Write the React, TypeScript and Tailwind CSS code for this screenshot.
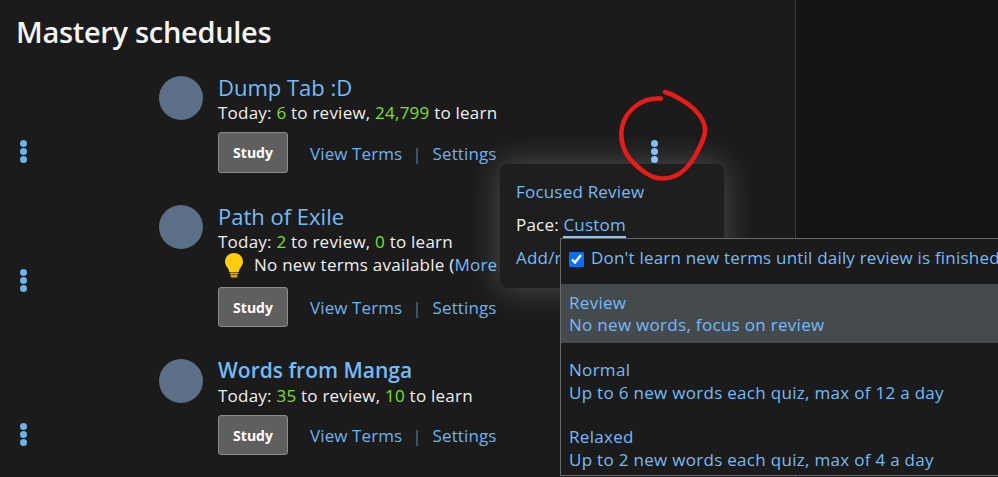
import React from 'react';

const font = "font-['Open_Sans',sans-serif]";

const Kebab: React.FC<{ dot?: string }> = ({ dot = 'bg-[#6cb4f0]' }) => (
  <div className="flex flex-col w-[7px] gap-px">
    <span className={`w-[7px] h-[7px] rounded-full ${dot}`}></span>
    <span className={`w-[7px] h-[7px] rounded-full ${dot}`}></span>
    <span className={`w-[7px] h-[7px] rounded-full ${dot}`}></span>
  </div>
);

const Bulb = () => (
  <svg width="20" height="26" viewBox="0 0 20 26" className="shrink-0">
    <path d="M10 1C4.8 1 1 4.9 1 9.6c0 3.6 2.2 5.6 3.4 7.6.6 1 .8 1.8.9 2.8h9.4c.1-1 .3-1.8.9-2.8 1.2-2 3.4-4 3.4-7.6C19 4.9 15.2 1 10 1z" fill="#ffcc12" />
    <rect x="5.5" y="20.4" width="9" height="2.2" rx="1" fill="#e8a000" />
    <rect x="6.5" y="23" width="7" height="2.4" rx="1.2" fill="#e8a000" />
  </svg>
);

interface Schedule {
  name: string;
  review: string;
  learn: string;
  hint?: boolean;
  heavy?: boolean;
  tall?: boolean;
}

const schedules: Schedule[] = [
  { name: 'Dump Tab :D', review: '6', learn: '24,799', tall: true },
  { name: 'Path of Exile', review: '2', learn: '0', hint: true },
  { name: 'Words from Manga', review: '35', learn: '10', heavy: true },
];

const ScheduleRow: React.FC<{ item: Schedule }> = ({ item }) => (
  <div className="flex items-start mb-8">
    <div className="w-[159px] pl-5 pt-16 shrink-0">
      <Kebab />
    </div>
    <div className="w-11 h-11 rounded-full bg-[#5b7087] shrink-0"></div>
    <div className="ml-[15px] w-[433px] shrink-0">
      <div className={`h-[26px] leading-[22px] text-[#76bbf7] whitespace-nowrap ${item.heavy ? 'text-[21px] font-semibold' : 'text-[22px] font-medium'}`}>{item.name}</div>
      <div className="text-[17px] tracking-[0.23px] leading-[22px] text-[#f0f0f0]">
        Today: <span className="text-[#7ee02c]">{item.review}</span> to review,{' '}
        <span className="text-[#7ee02c]">{item.learn}</span> to learn
      </div>
      {item.hint && (
        <div className="flex items-center h-6 text-[17px] tracking-[0.23px] leading-[22px] text-[#f0f0f0] pl-[6px] whitespace-nowrap">
          <Bulb />
          <span className="ml-[10px]">No new terms available (<span className="text-[#76bbf7]">More info</span>)</span>
        </div>
      )}
      <div className={`flex items-center ${item.hint ? 'mt-[10px]' : 'mt-2'}`}>
        <button className={`w-[70px] ${item.tall ? 'h-[41px]' : 'h-10'} bg-[#5f5f5f] border border-[#8c8c8c] rounded-[3px] text-[14px] font-bold text-white`}>
          Study
        </button>
        <span className="ml-[22px] pt-[2px] text-[17px] tracking-[0.1px] text-[#6db3f2]">View Terms</span>
        <span className="ml-[10px] mr-[11px] pt-[2px] text-[17px] text-[#6e6e6e]">|</span>
        <span className="pt-[2px] text-[17px] tracking-[0.1px] text-[#6db3f2]">Settings</span>
      </div>
    </div>
    <div className="pt-16 shrink-0">
      <Kebab dot="bg-[#7fbdf7]" />
    </div>
  </div>
);

export default function App() {
  return (
    <div className={`relative w-[998px] h-[477px] overflow-hidden bg-[#141414] ${font}`}>
      <div className="w-[796px] h-full bg-[#1b1b1b] border-r border-[#3a3a3a]">
        <h1 className="pl-4 pt-[12px] h-[76px] text-[29px] leading-10 font-semibold tracking-[-0.3px] text-[#f4f4f4] whitespace-nowrap">
          Mastery schedules
        </h1>
        {schedules.map((s) => (
          <ScheduleRow key={s.name} item={s} />
        ))}
      </div>

      {/* settings popover */}
      <div className="absolute left-[500px] top-[164px] w-[224px] h-[124px] rounded-lg bg-[#1e1e1e] shadow-[0_0_32px_rgba(255,255,255,0.24)] px-4 pt-[16px] text-[17px] tracking-[0.2px] leading-[24px] overflow-hidden">
        <div className="text-[#76bbf7]">Focused Review</div>
        <div className="mt-[9px] text-[#f0f0f0]">
          Pace: <span className="text-[#76bbf7] border-b-2 border-[#8cc6f8]">Custom</span>
        </div>
        <div className="mt-[9px] text-[#76bbf7] whitespace-nowrap">Add/remove</div>
      </div>

      {/* pace dropdown */}
      <div className="absolute left-[560px] top-[238px] w-[520px] h-[238px] bg-[#1b1b1b] border border-[#6a6a6a] text-[17px] tracking-[0.3px] leading-[22.5px] text-[#76bbf7] overflow-hidden">
        <label className="flex items-center h-[45px] pl-2 pb-[6px]">
          <input type="checkbox" defaultChecked className="w-[15px] h-[15px] accent-[#0b6ef5] mt-[2px]" />
          <span className="ml-[7px] whitespace-nowrap tracking-[0.2px]">Don't learn new terms until daily review is finished</span>
        </label>
        <div className="h-[59px] bg-[#454a4d] px-2 pt-2">
          <div>Review</div>
          <div className="-mt-px">No new words, focus on review</div>
        </div>
        <div className="mt-2 h-[59px] px-2 pt-2">
          <div>Normal</div>
          <div>Up to 6 new words each quiz, max of 12 a day</div>
        </div>
        <div className="mt-2 px-2 pt-2">
          <div>Relaxed</div>
          <div>Up to 2 new words each quiz, max of 4 a day</div>
        </div>
      </div>

      {/* hand drawn annotation */}
      <svg className="absolute left-0 top-0 pointer-events-none" width="998" height="477" viewBox="0 0 998 477" fill="none">
        <path
          d="M661 98.5C654 98 645 99 637 105C630 110 624 118 622 127C620 136 622 145 626 153C631 162 642 172 653 177C660 179 668 179 675 176C684 172 690 165 695 156C700 147 705 138 705 130C705 123 700 115 695 110C688 103 675 95 665 92"
          stroke="#e41c1c"
          strokeWidth="4.5"
          strokeLinecap="round"
        />
      </svg>
    </div>
  );
}
